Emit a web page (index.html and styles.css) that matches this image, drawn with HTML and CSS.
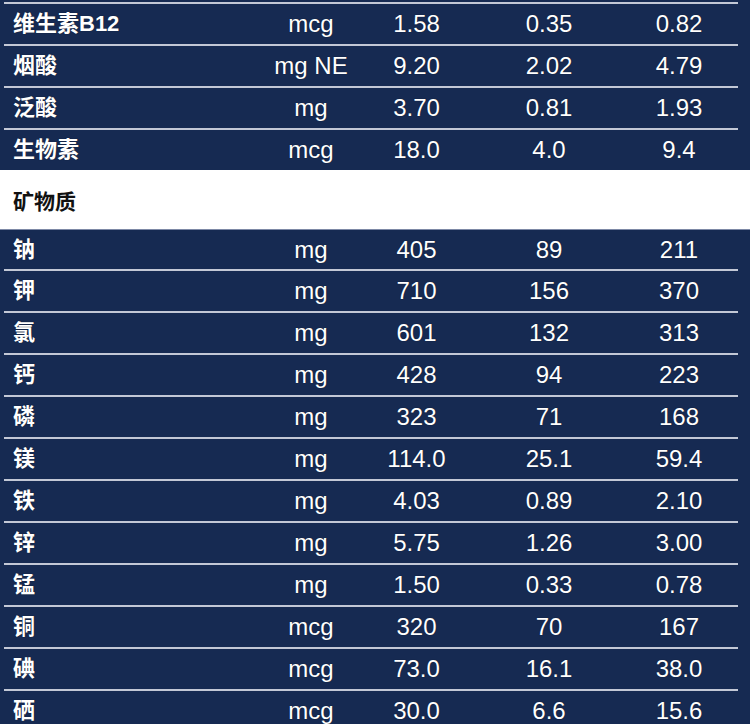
FILE: index.html
```html
<!DOCTYPE html>
<html lang="zh">
<head>
<meta charset="utf-8">
<link rel="stylesheet" href="styles.css">
</head>
<body>
<div class="page">
  <section class="block block-top">
    <div class="row"><span class="name">维生素B12</span><span>mcg</span><span>1.58</span><span>0.35</span><span>0.82</span></div>
    <div class="row"><span class="name">烟酸</span><span>mg NE</span><span>9.20</span><span>2.02</span><span>4.79</span></div>
    <div class="row"><span class="name">泛酸</span><span>mg</span><span>3.70</span><span>0.81</span><span>1.93</span></div>
    <div class="row"><span class="name">生物素</span><span>mcg</span><span>18.0</span><span>4.0</span><span>9.4</span></div>
  </section>
  <div class="heading">矿物质</div>
  <section class="block block-min">
    <div class="row"><span class="name">钠</span><span>mg</span><span>405</span><span>89</span><span>211</span></div>
    <div class="row"><span class="name">钾</span><span>mg</span><span>710</span><span>156</span><span>370</span></div>
    <div class="row"><span class="name">氯</span><span>mg</span><span>601</span><span>132</span><span>313</span></div>
    <div class="row"><span class="name">钙</span><span>mg</span><span>428</span><span>94</span><span>223</span></div>
    <div class="row"><span class="name">磷</span><span>mg</span><span>323</span><span>71</span><span>168</span></div>
    <div class="row"><span class="name">镁</span><span>mg</span><span>114.0</span><span>25.1</span><span>59.4</span></div>
    <div class="row"><span class="name">铁</span><span>mg</span><span>4.03</span><span>0.89</span><span>2.10</span></div>
    <div class="row"><span class="name">锌</span><span>mg</span><span>5.75</span><span>1.26</span><span>3.00</span></div>
    <div class="row"><span class="name">锰</span><span>mg</span><span>1.50</span><span>0.33</span><span>0.78</span></div>
    <div class="row"><span class="name">铜</span><span>mcg</span><span>320</span><span>70</span><span>167</span></div>
    <div class="row"><span class="name">碘</span><span>mcg</span><span>73.0</span><span>16.1</span><span>38.0</span></div>
    <div class="row"><span class="name">硒</span><span>mcg</span><span>30.0</span><span>6.6</span><span>15.6</span></div>
  </section>
</div>
</body>
</html>
```
FILE: styles.css
```css
html, body {
  margin: 0;
  padding: 0;
  background: #ffffff;
}
.page {
  width: 750px;
  height: 724px;
  overflow: hidden;
  font-family: "Liberation Sans", Arial, "Noto Sans CJK SC", sans-serif;
}
.block {
  background: #162a52;
  color: #ffffff;
}
.block-top {
  padding-top: 2px;
}
.block-top::before {
  content: "";
  display: block;
  height: 2px;
  margin: 0 12px 0 4px;
  background: #c3c8d6;
}
.block-min {
  border-top: 1px solid #7d89a6;
}
.row {
  display: grid;
  grid-template-columns: 261px 100px 111px 154px 106px;
  align-items: center;
  height: 40px;
  font-size: 24px;
  text-shadow: 0 0 1px rgba(0, 0, 0, 0.6);
}
.row + .row {
  border-top: 2px solid #c3c8d6;
  margin-left: 4px;
  margin-right: 12px;
  grid-template-columns: 257px 100px 111px 154px 106px;
}
.row + .row .name {
  padding-left: 9px;
}
.row span {
  text-align: center;
  white-space: nowrap;
}
.row .name {
  text-align: left;
  padding-left: 13px;
  font-size: 22px;
  line-height: 1;
  font-weight: bold;
  font-family: "Liberation Sans", "Noto Sans CJK SC", sans-serif;
}
.block-min .row:first-child {
  height: 39px;
}
.heading {
  height: 59px;
  display: flex;
  align-items: center;
  padding-left: 13px;
  font-size: 21px;
  font-weight: bold;
  color: #111111;
  font-family: "Liberation Sans", "Noto Sans CJK SC", sans-serif;
}
```
